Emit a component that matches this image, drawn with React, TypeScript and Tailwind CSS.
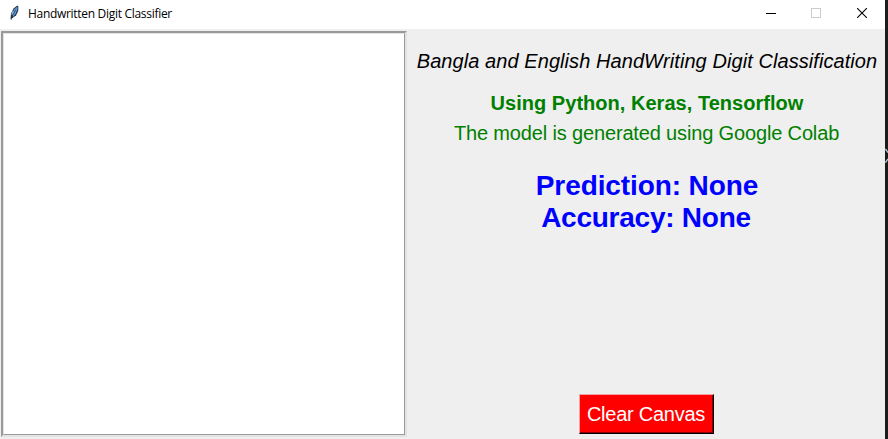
function FeatherIcon() {
  return (
    <svg width="12" height="16" viewBox="0 0 12 16" fill="none">
      <path d="M1.5 14 2 8.5 4.5 3.5 8.2 .6 9.4 1.4 9.2 6 7 10.5 3.5 13Z" fill="#2a3642" />
      <path d="M3.2 9.5 5 4.5 8.2 1.6 8.4 4.5 6.7 8.5 4 12Z" fill="#5b9de0" />
      <path d="M2 15 3.6 10.5 6.8 4.5" stroke="#14202c" strokeWidth=".6" />
      <path d="M2.8 9.5 4.2 6" stroke="#c3d2e2" strokeWidth=".9" />
    </svg>
  );
}

function TitleBar() {
  return (
    <header className="flex h-[29px] items-start bg-white">
      <div className="ml-[9px] mt-[5px] w-[19px]">
        <FeatherIcon />
      </div>
      <h1 className="mt-[5px] text-[12px] leading-[17px] tracking-[-0.3px] whitespace-nowrap font-['Open_Sans','Noto_Sans',sans-serif]">
        Handwritten Digit Classifier
      </h1>
      <div className="ml-auto mr-[18px] mt-2 flex gap-[35px]">
        <svg width="10" height="11" shapeRendering="crispEdges">
          <path d="M0 5.5H10" stroke="#000" />
        </svg>
        <svg className="mr-px" width="10" height="10" shapeRendering="crispEdges">
          <rect x=".5" y=".5" width="9" height="9" fill="none" stroke="#ccc" />
        </svg>
        <svg width="10" height="10">
          <path d="M0 0 10 10M10 0 0 10" stroke="#000" strokeWidth="1.1" />
        </svg>
      </div>
    </header>
  );
}

function DrawingCanvas() {
  return (
    <div className="ml-px mt-0.5 h-[406px] w-[406px] shrink-0 border-2 border-t-[#999] border-l-[#999] border-r-[#e3e3e3] border-b-[#e3e3e3]">
      <div className="h-full w-full border border-t-[#e3e3e3] border-l-[#e3e3e3] border-r-[#999] border-b-[#999] bg-white" />
    </div>
  );
}

export default function App() {
  return (
    <div className="flex h-[439px] w-[888px] overflow-hidden bg-[#1c1c1c]">
      <div className="flex w-[885px] shrink-0 flex-col bg-[#efefef]">
        <TitleBar />
        <main className="flex flex-1">
          <DrawingCanvas />
          <section className="flex flex-1 flex-col items-center pl-0.5 whitespace-nowrap font-['Liberation_Sans',Arial,sans-serif] text-[20px] leading-[30px]">
            <p className="mt-[17px] tracking-[0.07px] italic text-black">Bangla and English HandWriting Digit Classification</p>
            <p className="mt-3 tracking-[0.03px] font-bold text-[#008000]">Using Python, Keras, Tensorflow</p>
            <p className="mr-px tracking-[-0.15px] text-[#008000]">The model is generated using Google Colab</p>
            <div className="mt-[22px] text-center text-[28px] leading-8 font-bold text-[#0000ff]">
              <p className="tracking-[-0.1px]">Prediction: None</p>
              <p className="mr-0.5 tracking-[-0.25px]">Accuracy: None</p>
            </div>
            <div className="mr-0.5 mt-[160px] border border-t-[#f0a0a0] border-l-[#f0a0a0] border-r-black border-b-black">
              <button className="block h-[38px] w-[133px] border-r border-b border-[#8c0000] bg-[#ff0000] pl-px tracking-[-0.25px] text-white">
                Clear Canvas
              </button>
            </div>
          </section>
        </main>
      </div>
      <div className="flex flex-1 items-start pt-[148px]">
        <svg width="3" height="16" viewBox="0 0 3 16" fill="none">
          <path d="M.5 1 3 4.5M3 11 .5 14.5" stroke="#b5cbd8" strokeWidth="1.3" />
        </svg>
      </div>
    </div>
  );
}
